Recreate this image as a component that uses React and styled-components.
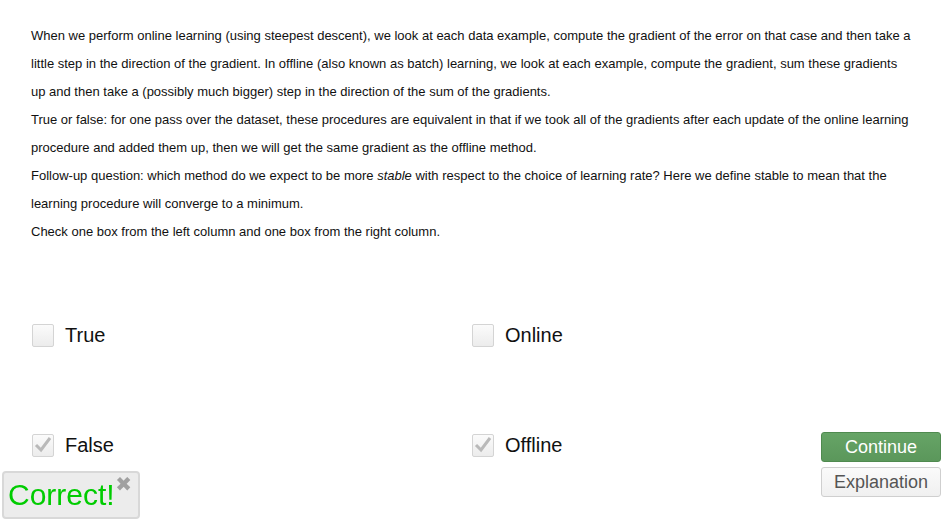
import React from "react";
import styled, { createGlobalStyle } from "styled-components";

const GlobalStyle = createGlobalStyle`
  html, body {
    margin: 0;
    padding: 0;
    background: #fff;
    font-family: "Liberation Sans", Arial, sans-serif;
    color: #111;
  }
`;

const Page = styled.div`
  padding: 22px 0 0 31px;
  height: 523px;
  box-sizing: border-box;
  overflow: hidden;
`;

const Question = styled.div`
  width: 882px;
  font-size: 13px;
  line-height: 28px;
`;

const Para = styled.p`
  margin: 0;
`;

const Options = styled.div`
  display: grid;
  grid-template-columns: 440px 350px 120px;
  grid-template-rows: 110px 110px;
  align-items: center;
  margin-top: 34px;
`;

const Option = styled.label`
  grid-column: ${(p) => p.$col};
  grid-row: ${(p) => p.$row};
  display: flex;
  align-items: center;
  gap: 11px;
  font-size: 20px;
  color: #111;
`;

const Box = styled.span`
  width: 20px;
  height: 21px;
  margin-left: 1px;
  border: 1px solid #d4d4d4;
  border-radius: 2px;
  background: linear-gradient(#fbfbfb, #ececec);
  display: flex;
  align-items: center;
  justify-content: center;
`;

const Actions = styled.div`
  grid-column: 3;
  grid-row: 2;
  align-self: end;
  margin-bottom: 3px;
  display: flex;
  flex-direction: column;
  gap: 5px;
`;

const Button = styled.button`
  width: 120px;
  height: 30px;
  padding: 0;
  border-radius: 3px;
  font-family: "Liberation Sans", Arial, sans-serif;
  font-size: 18px;
  border: 1px solid ${(p) => (p.$primary ? "#4f8a4f" : "#cfcfcf")};
  background: ${(p) =>
    p.$primary
      ? "linear-gradient(#66a466, #5b975b)"
      : "linear-gradient(#fafafa, #f0f0f0)"};
  color: ${(p) => (p.$primary ? "#fff" : "#555")};
`;

const Toast = styled.div`
  position: fixed;
  left: 2px;
  bottom: 4px;
  width: 138px;
  height: 48px;
  box-sizing: border-box;
  border: 2px solid #d8d8d8;
  border-radius: 4px;
  background: #ececec;
  display: flex;
  align-items: center;
  padding-left: 4px;
`;

const ToastText = styled.span`
  font-size: 30px;
  color: #00cc00;
`;

const Close = styled.span`
  position: absolute;
  top: 2px;
  right: 6px;
  font-family: "DejaVu Sans", sans-serif;
  font-size: 20px;
  font-weight: bold;
  line-height: 18px;
  color: #a0a0a0;
`;

const Check = () => (
  <svg width="18" height="16" viewBox="0 0 18 16">
    <polyline
      points="2,8 7,13 16,1"
      fill="none"
      stroke="#b9b9b9"
      strokeWidth="3"
    />
  </svg>
);

const Choice = ({ label, checked, col, row }) => (
  <Option $col={col} $row={row}>
    <Box>{checked && <Check />}</Box>
    {label}
  </Option>
);

export default function App() {
  return (
    <Page>
      <GlobalStyle />
      <Question>
        <Para>
          When we perform online learning (using steepest descent), we look at
          each data example, compute the gradient of the error on that case and
          then take a little step in the direction of the gradient. In offline
          (also known as batch) learning, we look at each example, compute the
          gradient, sum these gradients up and then take a (possibly much
          bigger) step in the direction of the sum of the gradients.
        </Para>
        <Para>
          True or false: for one pass over the dataset, these procedures are
          equivalent in that if we took all of the gradients after each update
          of the online learning procedure and added them up, then we will get
          the same gradient as the offline method.
        </Para>
        <Para>
          Follow-up question: which method do we expect to be more{" "}
          <i>stable</i> with respect to the choice of learning rate? Here we
          define stable to mean that the learning procedure will converge to a
          minimum.
        </Para>
        <Para>Check one box from the left column and one box from the right column.</Para>
      </Question>
      <Options>
        <Choice label="True" col={1} row={1} />
        <Choice label="Online" col={2} row={1} />
        <Choice label="False" col={1} row={2} checked />
        <Choice label="Offline" col={2} row={2} checked />
        <Actions>
          <Button $primary>Continue</Button>
          <Button>Explanation</Button>
        </Actions>
      </Options>
      <Toast>
        <ToastText>Correct!</ToastText>
        <Close>✖</Close>
      </Toast>
    </Page>
  );
}
